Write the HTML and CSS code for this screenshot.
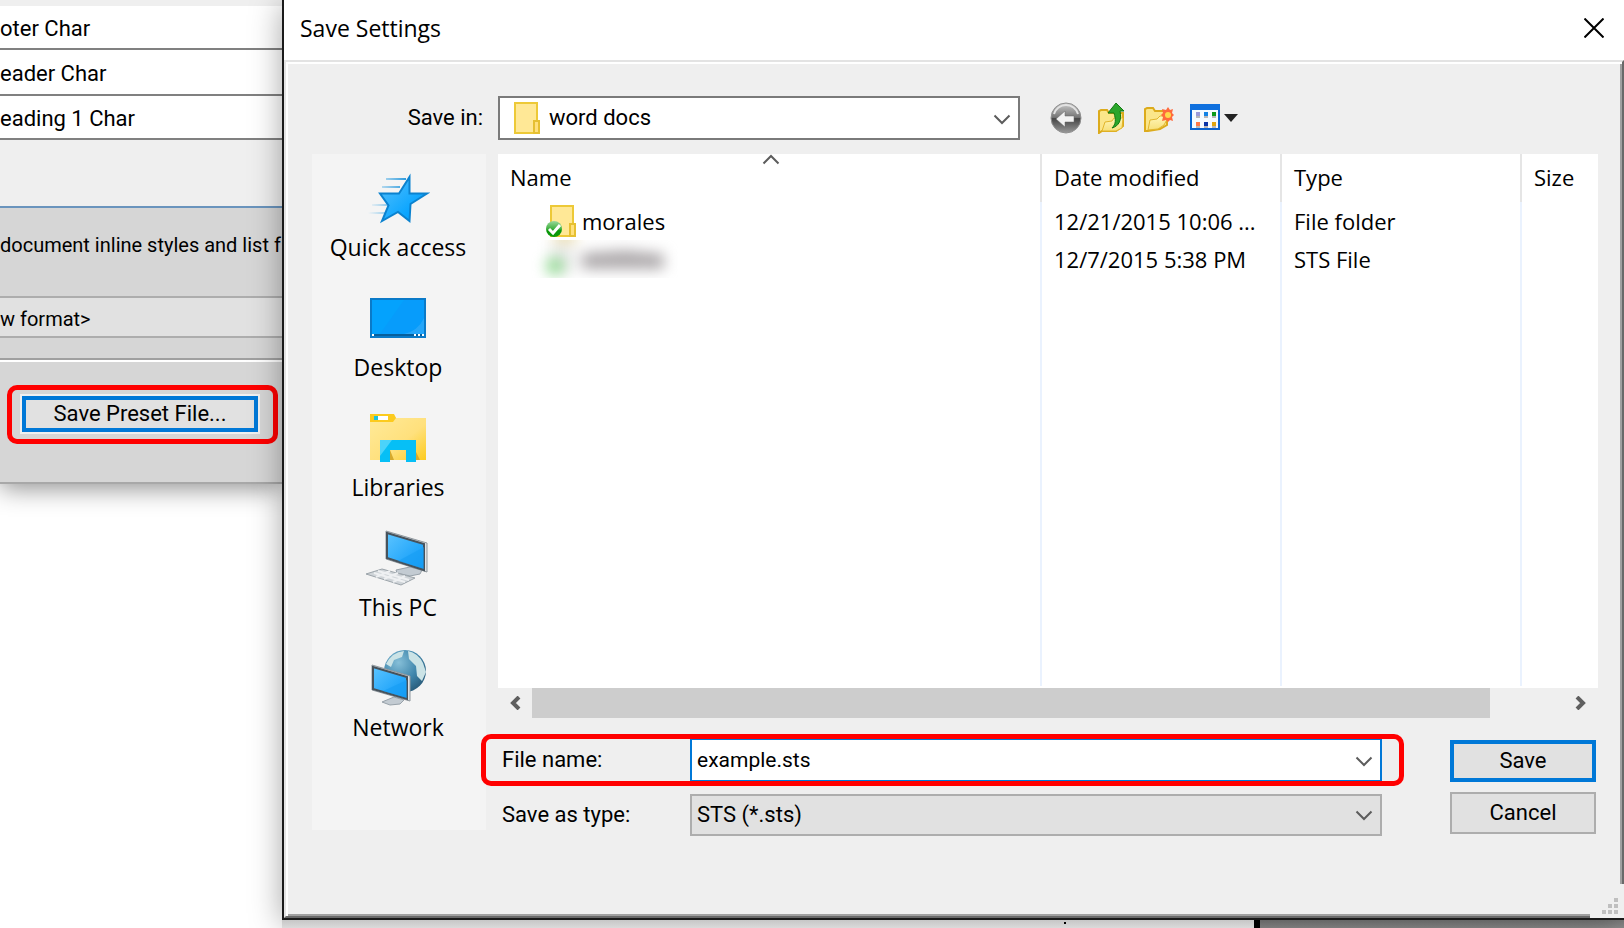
FILE: index.html
```
<!DOCTYPE html>
<html lang="en">
<head>
    <meta charset="UTF-8">
    <meta name="viewport" content="width=device-width, initial-scale=1.0">
    <title>Save Settings</title>
    <link rel="stylesheet" href="styles.css">
</head>
<body>
    <!-- shared icon shapes -->
    <svg class="defs" width="0" height="0" aria-hidden="true">
        <defs>
            <linearGradient id="blue" x1="0" y1="0" x2="1" y2="1">
                <stop offset="0" stop-color="#5cc4ff"/><stop offset="0.6" stop-color="#28a9fb"/><stop offset="1" stop-color="#149cf5"/>
            </linearGradient>
            <linearGradient id="starFill" x1="0" y1="0" x2="1" y2="1">
                <stop offset="0" stop-color="#59c1fb"/><stop offset="0.7" stop-color="#0aa5ff"/>
            </linearGradient>
            <linearGradient id="streak">
                <stop offset="0" stop-color="#4aaee8" stop-opacity="0"/><stop offset="1" stop-color="#2f9bdd"/>
            </linearGradient>
            <linearGradient id="yellow" x1="0" y1="0" x2="1" y2="1">
                <stop offset="0" stop-color="#ffeb9b"/><stop offset="0.6" stop-color="#ffe07c"/><stop offset="1" stop-color="#fccb1e"/>
            </linearGradient>
            <linearGradient id="oldFolder" x1="0" y1="0" x2="0" y2="1">
                <stop offset="0" stop-color="#fff6b8"/><stop offset="1" stop-color="#f7e07a"/>
            </linearGradient>
            <linearGradient id="gray" x1="0" y1="0" x2="0" y2="1">
                <stop offset="0" stop-color="#c9c9c9"/><stop offset="0.48" stop-color="#757575"/><stop offset="0.52" stop-color="#454545"/><stop offset="1" stop-color="#9a9a9a"/>
            </linearGradient>
            <radialGradient id="globe" cx="0.35" cy="0.3" r="0.75">
                <stop offset="0" stop-color="#86bfd8"/><stop offset="0.6" stop-color="#3f86ac"/><stop offset="1" stop-color="#2a5d7c"/>
            </radialGradient>
            <linearGradient id="badge" x1="0" y1="0" x2="0" y2="1">
                <stop offset="0" stop-color="#9bd89b"/><stop offset="0.5" stop-color="#3eb03e"/><stop offset="0.6" stop-color="#0a970a"/><stop offset="1" stop-color="#0b9a0b"/>
            </linearGradient>
            <symbol id="folder" viewBox="0 0 26 32">
                <path d="M1 1h22v30H1z" fill="url(#yellow)" stroke="#edc937" stroke-width="2"/>
                <path d="M2 2h20v28H2z" fill="#ffe896"/>
                <path d="M20 31V19h5v12z" fill="#ffe07c" stroke="#e6c032" stroke-width="2"/>
            </symbol>
            <symbol id="chevron" viewBox="0 0 18 11">
                <path d="M1.500 1.500L9 9l7.500-7.500" fill="none" stroke="#5c5c5c" stroke-width="2"/>
            </symbol>
        </defs>
    </svg>

    <aside class="styles-window">
        <div class="panel">
            <ul class="style-list">
                <li>oter Char</li>
                <li class="cut">eader Char</li>
                <li>eading 1 Char</li>
            </ul>
            <div class="note">document inline styles and list f</div>
            <div class="format">w format&gt;</div>
            <div class="panel-footer">
                <div class="marked preset">
                    <button type="button" class="btn btn-default">Save Preset File...</button>
                </div>
            </div>
        </div>
    </aside>

    <div class="main">
        <section class="dialog" role="dialog" aria-labelledby="title">
            <header class="title-bar">
                <h1 id="title">Save Settings</h1>
                <button type="button" class="close" aria-label="Close">
                    <svg width="20" height="20" viewBox="0 0 20 20"><path d="M0.500 0.500l19 19M19.500 0.500l-19 19" stroke="#000" stroke-width="2"/></svg>
                </button>
            </header>

            <div class="dialog-body">
                <div class="look-in">
                    <label for="saveIn">Save in:</label>
                    <div class="combo">
                        <svg class="combo-icon" width="26" height="32"><use href="#folder"/></svg>
                        <select id="saveIn"><option>word docs</option></select>
                        <svg class="chevron" width="18" height="11"><use href="#chevron"/></svg>
                    </div>
                    <div class="tools">
                        <button type="button" aria-label="Back">
                            <svg width="32" height="32" viewBox="0 0 32 32">
                                <circle cx="16" cy="16" r="15" fill="url(#gray)" stroke="#909090"/>
                                <path d="M4 12a12.500 12.500 0 0 1 24 0" fill="none" stroke="#e2e2e2" stroke-width="2"/>
                                <path d="M6 17l9-8v5h9v6h-9v5z" fill="#f2f2f2" stroke="#666" stroke-width="0.500"/>
                            </svg>
                        </button>
                        <button type="button" aria-label="Up one level">
                            <svg width="28" height="32" viewBox="0 0 28 32">
                                <path d="M1 31V9l2-1h6l2 3h14v13l-7 5H4z" fill="#fbe68a" stroke="#dcab1c" stroke-width="2"/>
                                <path d="M4 29l3-9 7-1 2-3h9l-1 10-6 3z" fill="url(#oldFolder)" stroke="#e2b62c"/>
                                <path d="M14 26c4-4 4-8 2-15h-6l8-10 8 8h-4c2 9-1 15-8 17z" fill="#2ba52b" stroke="#117a11"/>
                            </svg>
                        </button>
                        <button type="button" aria-label="New folder">
                            <svg width="32" height="32" viewBox="0 0 32 32">
                                <path d="M3 29V7l2-1h6l2 3h12v14l-7 4-12 2z" fill="#fbe68a" stroke="#dcab1c" stroke-width="2"/>
                                <path d="M6 28l2-10 7-1 3-3h9l-5 9-6 4z" fill="url(#oldFolder)" stroke="#e2b62c"/>
                                <path d="M26 5l2 3 3-1-1 4 2 2-2 2 1 4-3-1-2 2-2-2-4 1 1-4-2-2 2-2-1-4 4 1z" fill="#ff6a3c"/>
                                <circle cx="26" cy="13" r="3" fill="#ffd84a"/>
                            </svg>
                        </button>
                        <button type="button" aria-label="View menu">
                            <svg width="48" height="32" viewBox="0 0 48 32">
                                <path d="M1 3h28v24H1z" fill="#f5fbff" stroke="#0a63cf" stroke-width="2"/>
                                <path d="M0 2h30v6H0z" fill="#0f70de"/>
                                <path d="M6 10h4v4H6z" fill="#9a9ad8"/><path d="M14 10h4v4h-4z" fill="#1283e4"/><path d="M22 10h4v4h-4z" fill="#0b9a1a"/>
                                <path d="M6 20h4v4H6z" fill="#ff7846"/><path d="M14 20h4v4h-4z" fill="#0a35a8"/><path d="M22 20h4v4h-4z" fill="#e0a510"/>
                                <path d="M6 14h4v2H6zM14 14h4v2h-4zM22 14h4v2h-4zM6 24h4v2H6zM14 24h4v2h-4zM22 24h4v2h-4z" fill="#b8b8b8"/>
                                <path d="M34 12h14l-7 8z" fill="#222"/>
                            </svg>
                        </button>
                    </div>
                </div>

                <div class="columns">
                    <nav class="places">
                        <a href="#quick">
                            <svg width="64" height="64" viewBox="0 0 64 64">
                                <path d="M20 12h20v2H20zM16 20h18v2H16zM6 38h18v2H6zM2 46h18v2H2z" fill="url(#streak)"/>
                                <path d="M43.500 11v16.500H61L44.500 38l-1 17L32 46l-16 9 6.500-15.500L14 27.500h19z" fill="url(#starFill)" stroke="#0b82cf" stroke-width="2"/>
                            </svg>
                            <span>Quick access</span>
                        </a>
                        <a href="#desktop">
                            <svg width="64" height="64" viewBox="0 0 64 64">
                                <path d="M5 13h54v38H5z" fill="#04a2fd" stroke="#0a7ac8" stroke-width="2"/>
                                <path d="M38 14h20v34H14z" fill="#079cfb"/>
                                <path d="M58 32v16H38q14-3 20-16z" fill="#39aefa" opacity="0.600"/>
                                <path d="M6 48h52v2H6z" fill="#075f9c"/>
                                <path d="M6 48h2v2H6zM48 48h2v2h-2zM52 48h2v2h-2zM56 48h2v2h-2z" fill="#fff"/>
                            </svg>
                            <span>Desktop</span>
                        </a>
                        <a href="#libraries">
                            <svg width="64" height="64" viewBox="0 0 64 64">
                                <path d="M4 8h23l3 4h30v42H4z" fill="url(#yellow)"/>
                                <path d="M4 8h24l2 4-3 4H4z" fill="#fccb1e"/>
                                <path d="M8 10h14v4H8z" fill="#fff"/><path d="M8 10h4v4H8z" fill="#1cc4dc"/>
                                <path d="M50 46l4 8h-4zM24 44l4 10h-4z" fill="#d6a92c"/>
                                <path d="M14 34h36v22H40V44H24v12H14z" fill="#06bff6"/>
                                <path d="M14 34h12L14 50z" fill="#4bd3fa"/>
                            </svg>
                            <span>Libraries</span>
                        </a>
                        <a href="#this-pc">
                            <svg width="64" height="64" viewBox="0 0 64 64">
                                <path d="M30 44l14-3 12 3-2 4-10 2-13-3z" fill="#c3cbd2" stroke="#98a2aa"/>
                                <path d="M0 48l16-5 33 9-14 7z" fill="#cfd4d8" stroke="#9ca4aa"/>
                                <path d="M8 47l31 9M12 45l31 9M10 51l14-6M18 53l14-6M27 56l12-6" stroke="#eef0f2" stroke-width="2"/>
                                <path d="M20 5l41 12v29L20 33z" fill="#dfe3e6" stroke="#8f979d"/>
                                <path d="M21 7l37 11v26L21 32z" fill="url(#blue)" stroke="#47525b" stroke-width="2"/>
                                <path d="M58 21v22L32 35z" fill="#159cf3" opacity="0.600"/>
                            </svg>
                            <span>This PC</span>
                        </a>
                        <a href="#network">
                            <svg width="64" height="64" viewBox="0 0 64 64">
                                <circle cx="39" cy="25" r="21" fill="url(#globe)"/>
                                <path d="M20 18q6-12 18-13l-2 6-8 3-3 7zM42 5q10 2 15 12l3 9-4 9-5-5-1-10-7-7z" fill="#cbe3e6"/>
                                <path d="M16 56l12-5 10 3-4 4-10 1z" fill="#c3cbd2" stroke="#98a2aa"/>
                                <path d="M6 19l38 11v25L6 44z" fill="#dfe3e6" stroke="#8f979d"/>
                                <path d="M7 21l34 10v22L7 43z" fill="url(#blue)" stroke="#47525b" stroke-width="2"/>
                                <path d="M41 34v18l-24-7z" fill="#159cf3" opacity="0.600"/>
                            </svg>
                            <span>Network</span>
                        </a>
                    </nav>

                    <div class="content">
                        <div class="file-list">
                            <svg class="sort" width="18" height="11"><use href="#chevron"/></svg>
                            <table>
                                <thead>
                                    <tr><th>Name</th><th class="date">Date modified</th><th class="type">Type</th><th class="size">Size</th></tr>
                                </thead>
                                <tbody>
                                    <tr>
                                        <td>
                                            <div class="file">
                                                <svg width="30" height="32" viewBox="0 0 30 32">
                                                    <use href="#folder" x="4" width="26" height="32"/>
                                                    <circle cx="8" cy="24" r="8" fill="url(#badge)"/>
                                                    <path d="M3 24l4 4 7-8" fill="none" stroke="#fff" stroke-width="3"/>
                                                </svg>
                                                morales
                                            </div>
                                        </td>
                                        <td>12/21/2015 10:06 ...</td>
                                        <td>File folder</td>
                                        <td></td>
                                    </tr>
                                    <tr>
                                        <td>
                                            <div class="file hidden-name" aria-label="Hidden file">
                                                <svg width="130" height="38" viewBox="0 0 130 38">
                                                    <path d="M8-6h22v6H8z" fill="#dcc46a"/>
                                                    <path d="M4 4h24v30H4z" fill="#e9e9e9"/>
                                                    <circle cx="9" cy="26" r="9" fill="#8fd890"/>
                                                    <path d="M36 13l44-3 38 4v15H36z" fill="#aeaaac"/>
                                                </svg>
                                            </div>
                                        </td>
                                        <td>12/7/2015 5:38 PM</td>
                                        <td>STS File</td>
                                        <td></td>
                                    </tr>
                                    <tr class="rest"><td></td><td></td><td></td><td></td></tr>
                                </tbody>
                            </table>
                        </div>
                        <div class="scrollbar">
                            <button type="button" aria-label="Scroll left">
                                <svg width="12" height="14" viewBox="0 0 12 14"><path d="M10 1L4 7l6 6" fill="none" stroke="#5f5f5f" stroke-width="4"/></svg>
                            </button>
                            <div class="track"><div class="thumb"></div></div>
                            <button type="button" aria-label="Scroll right">
                                <svg width="12" height="14" viewBox="0 0 12 14"><path d="M2 1l6 6-6 6" fill="none" stroke="#5f5f5f" stroke-width="4"/></svg>
                            </button>
                        </div>

                        <form class="save-form">
                            <div class="fields">
                                <div class="field marked file-name">
                                    <label for="fileName">File name:</label>
                                    <div class="combo active">
                                        <input type="text" id="fileName" value="example.sts">
                                        <svg class="chevron" width="18" height="11"><use href="#chevron"/></svg>
                                    </div>
                                </div>
                                <div class="field">
                                    <label for="fileType">Save as type:</label>
                                    <div class="combo flat">
                                        <select id="fileType"><option>STS (*.sts)</option></select>
                                        <svg class="chevron" width="18" height="11"><use href="#chevron"/></svg>
                                    </div>
                                </div>
                            </div>
                            <div class="actions">
                                <button type="button" class="btn btn-default">Save</button>
                                <button type="button" class="btn">Cancel</button>
                            </div>
                        </form>
                    </div>
                </div>

                <svg class="grip" width="34" height="34" viewBox="0 0 34 34">
                    <path d="M24 14h4v4h-4zM18 20h4v4h-4zM24 20h4v4h-4zM12 26h4v4h-4zM18 26h4v4h-4zM24 26h4v4h-4z" fill="#bfbfbf"/>
                </svg>
            </div>
        </section>
        <div class="behind"><div class="page"></div><div class="desk"></div></div>
    </div>
</body>
</html>
```
FILE: styles.css
```
* {
    box-sizing: border-box;
}
body {
    display: flex;
    min-height: 100vh;
    margin: 0;
    background: #fff;
    color: #000;
    font-family: Roboto, sans-serif;
    font-size: 22px;
    line-height: 30px;
}
button, input, select {
    margin: 0;
    padding: 0;
    border: 0;
    border-radius: 0;
    background: none;
    color: inherit;
    font: inherit;
}
svg {
    display: block;
    flex: none;
}
.defs {
    position: absolute;
}

/* window behind the dialog */
.styles-window {
    flex: none;
    width: 282px;
    overflow: hidden;
    white-space: nowrap;
}
.panel {
    padding-top: 6px;
    background: #efefef;
    border-bottom: 2px solid #a8a8a8;
    box-shadow: 0 4px 24px rgba(0, 0, 0, 0.45);
}
.style-list {
    margin: 0 0 66px;
    padding: 0;
    list-style: none;
}
.style-list li {
    height: 44px;
    padding-top: 2px;
    background: #fff;
    border-bottom: 2px solid #808080;
    line-height: 42px;
}
.style-list .cut {
    height: 46px;
    line-height: 44px;
}
.note {
    height: 90px;
    padding-top: 22px;
    border-top: 2px solid #6a94bd;
    background: #d6d6d6;
    font-size: 20px;
}
.format {
    height: 42px;
    padding-top: 2px;
    border: solid #adadad;
    border-width: 2px 0;
    background: #e1e1e1;
    font-size: 20px;
    line-height: 38px;
}
.panel-footer {
    padding: 38px 22px 50px;
    border-top: 20px solid #d6d6d6;
    background: linear-gradient(#a0a0a0 2px, #fff 2px, #fff 4px, #d6d6d6 4px);
}
.preset {
    display: flex;
    width: 236px;
}
.preset .btn {
    flex: 1;
    height: 36px;
    outline: 2px solid #f0f0f0;
}

/* red highlight frame */
.marked {
    position: relative;
}
.marked::after {
    content: "";
    position: absolute;
    inset: -11px -20px -12px -15px;
    border: 5px solid #f00;
    border-radius: 10px;
    pointer-events: none;
}
.marked.file-name::after {
    inset: -4px -22px -4px -17px;
}

.btn {
    height: 42px;
    border: 2px solid #adadad;
    background: #e1e1e1;
}
.btn-default {
    border: 4px solid #0078d7;
    line-height: 28px;
}

/* dialog */
.main {
    display: flex;
    flex: 1;
    flex-direction: column;
    min-width: 0;
}
.dialog {
    position: relative;
    display: flex;
    flex: 1;
    flex-direction: column;
    border: solid #1a1a1a;
    border-width: 0 0 2px 2px;
    background: #fff;
    box-shadow: 0 4px 30px rgba(0, 0, 0, 0.35);
}
.title-bar {
    display: flex;
    align-items: center;
    justify-content: space-between;
    height: 60px;
    padding: 0 20px 4px 16px;
}
.title-bar h1 {
    margin: 0;
    font-family: "Open Sans", sans-serif;
    font-size: 22px;
    font-weight: 400;
}
.dialog-body {
    position: relative;
    display: flex;
    flex: 1;
    flex-direction: column;
    gap: 14px;
    padding: 34px 24px 80px 26px;
    border: solid;
    border-color: #e3e3e3 #696969 #696969 #e3e3e3;
    border-width: 2px;
    background: #efefef;
    box-shadow: inset 2px 2px 0 #fff, inset -2px -2px 0 #a0a0a0;
}
.look-in {
    display: flex;
    align-items: center;
}
.look-in label {
    width: 186px;
    padding-right: 15px;
    text-align: right;
}
.combo {
    position: relative;
    flex: 1;
    height: 44px;
}
.combo input, .combo select {
    display: block;
    width: 100%;
    height: 100%;
    padding: 0 40px 0 5px;
    border: 2px solid #7a7a7a;
    background: #fff;
    outline: none;
    appearance: none;
}
.look-in .combo {
    flex: 0 1 522px;
}
.look-in select {
    padding-left: 49px;
}
.combo.active input {
    border-color: #0078d7;
    font-size: 21px;
}
.combo.flat {
    height: 42px;
}
.combo.flat select {
    border-color: #adadad;
    background: #e1e1e1;
}
.combo-icon {
    position: absolute;
    top: 6px;
    left: 16px;
}
.chevron {
    position: absolute;
    top: 18px;
    right: 9px;
    pointer-events: none;
}
.combo.flat .chevron {
    top: 16px;
}
.tools {
    display: flex;
    gap: 16px;
    margin-left: 30px;
}

.columns {
    display: flex;
    flex: 1;
    gap: 12px;
}
.places {
    display: flex;
    flex: none;
    flex-direction: column;
    gap: 24px;
    width: 174px;
    margin-bottom: 6px;
    padding: 12px 2px 0 0;
    background: #f4f4f4;
    font-family: "Open Sans", sans-serif;
}
.places a {
    display: flex;
    flex-direction: column;
    align-items: center;
    gap: 2px;
    color: inherit;
    text-decoration: none;
}
.title-bar h1, .places {
    font-size: 23px;
}
.content {
    display: flex;
    flex: 1;
    flex-direction: column;
    min-width: 0;
}

/* file list */
.file-list {
    position: relative;
    display: flex;
    flex: 1;
    padding-bottom: 2px;
    background: #fff;
    font-family: "Open Sans", sans-serif;
}
.sort {
    position: absolute;
    top: 0;
    left: 264px;
    transform: scaleY(-1);
}
table {
    width: 100%;
    table-layout: fixed;
    border-collapse: separate;
    border-spacing: 0;
    white-space: nowrap;
}
th, td {
    height: 38px;
    padding: 0 0 0 12px;
    border-right: 2px solid #eaf2fe;
    text-align: left;
}
th {
    height: 48px;
    padding-bottom: 2px;
    border-color: #e5e5e5;
    font-weight: 400;
}
th:last-child, td:last-child {
    border-right: 0;
}
.date, .type {
    width: 240px;
}
.size {
    width: 76px;
}
.rest td {
    height: auto;
}
.file {
    display: flex;
    align-items: center;
    gap: 6px;
    padding-left: 36px;
}
.hidden-name {
    overflow: hidden;
    margin-left: -12px;
    padding-left: 48px;
}
.hidden-name svg {
    overflow: visible;
    filter: blur(7px);
}

.scrollbar {
    display: flex;
    height: 30px;
    margin-bottom: 20px;
}
.scrollbar button {
    display: flex;
    align-items: center;
    justify-content: center;
    width: 34px;
}
.track {
    flex: 1;
}
.thumb {
    width: 92.8%;
    height: 100%;
    background: #cdcdcd;
}

.save-form {
    display: flex;
    gap: 68px;
    padding-right: 2px;
}
.fields {
    display: flex;
    flex: 1;
    flex-direction: column;
    gap: 12px;
}
.field {
    display: flex;
    align-items: center;
}
.field label {
    width: 192px;
    padding-left: 4px;
}
.actions {
    display: flex;
    flex-direction: column;
    gap: 10px;
    width: 146px;
    padding-top: 2px;
}
.grip {
    position: absolute;
    right: -2px;
    bottom: -2px;
    background: #efefef;
}

/* strip of the screen under the dialog */
.behind {
    display: flex;
    height: 8px;
}
.page {
    position: relative;
    flex: 972;
    border-right: 6px solid #000;
    background: linear-gradient(#c6c6c6, #dadada);
}
.page::after {
    content: "";
    position: absolute;
    top: 2px;
    right: 188px;
    width: 2px;
    height: 2px;
    background: #000;
}
.desk {
    flex: 364;
    background: linear-gradient(#828282, #909090);
}
```
